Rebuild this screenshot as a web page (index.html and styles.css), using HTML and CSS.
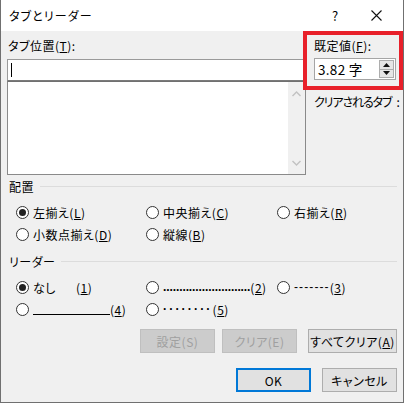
FILE: index.html
```html
<!DOCTYPE html>
<html lang="ja">
<head>
<meta charset="utf-8">
<link rel="stylesheet" href="styles.css">
</head>
<body>
<div class="window">
  <div class="titlebar">
    <span class="title">タブとリーダー</span>
    <span class="help">?</span>
    <span class="close"><svg width="11" height="11" viewBox="0 0 11 11"><path d="M0.5 0.5 L10.5 10.5 M10.5 0.5 L0.5 10.5" stroke="#111" stroke-width="1.1" fill="none"/></svg></span>
  </div>
  <div class="content">
    <div class="top">
      <div class="left">
        <div class="label">タブ位置(<u>T</u>):</div>
        <div class="input"><span class="caret"></span></div>
        <div class="listbox">
          <div class="scrollbar">
            <svg width="9" height="6" viewBox="0 0 9 6"><path d="M0.5 5 L4.5 1 L8.5 5" stroke="#c2c2c2" stroke-width="1.4" fill="none"/></svg>
            <svg width="9" height="6" viewBox="0 0 9 6"><path d="M0.5 1 L4.5 5 L8.5 1" stroke="#c2c2c2" stroke-width="1.4" fill="none"/></svg>
          </div>
        </div>
      </div>
      <div class="right">
        <div class="label">既定値(<u>F</u>):</div>
        <div class="spin">
          <span class="spin-value">3.82 字</span>
          <div class="spin-btns">
            <div class="spin-btn"><svg width="7" height="4" viewBox="0 0 7 4"><path d="M0 4 L3.5 0 L7 4 Z" fill="#111"/></svg></div>
            <div class="spin-btn"><svg width="7" height="4" viewBox="0 0 7 4"><path d="M0 0 L3.5 4 L7 0 Z" fill="#111"/></svg></div>
          </div>
        </div>
        <div class="clear-label">クリアされるタブ<span class="colon">:</span></div>
      </div>
    </div>

    <div class="group-head first"><span>配置</span><div class="rule"></div></div>
    <div class="radios">
      <label class="radio"><span class="dot on"></span>左揃え(<u>L</u>)</label>
      <label class="radio"><span class="dot"></span>中央揃え(<u>C</u>)</label>
      <label class="radio"><span class="dot"></span>右揃え(<u>R</u>)</label>
      <label class="radio"><span class="dot"></span>小数点揃え(<u>D</u>)</label>
      <label class="radio"><span class="dot"></span>縦線(<u>B</u>)</label>
      <span></span>
    </div>

    <div class="group-head"><span>リーダー</span><div class="rule"></div></div>
    <div class="radios">
      <label class="radio"><span class="dot on"></span><span class="none-text">なし</span>(<u>1</u>)</label>
      <label class="radio"><span class="dot"></span><span class="lead-dots">...........................</span>(<u>2</u>)</label>
      <label class="radio"><span class="dot"></span><span class="lead-dash">-------</span>(<u>3</u>)</label>
      <label class="radio"><span class="dot"></span><span class="lead-line"></span>(<u>4</u>)</label>
      <label class="radio"><span class="dot"></span><span class="lead-mid">········</span>(<u>5</u>)</label>
      <span></span>
    </div>

    <div class="btn-row row1">
      <button class="btn disabled w75">設定(S)</button>
      <button class="btn disabled w75 gap-small">クリア(E)</button>
      <button class="btn wide">すべてクリア(<u>A</u>)</button>
    </div>
    <div class="btn-row row2">
      <button class="btn default w75">OK</button>
      <button class="btn w75">キャンセル</button>
    </div>
  </div>
  <div class="highlight"></div>
</div>
</body>
</html>
```
FILE: styles.css
```css
* { box-sizing: border-box; }
html, body { margin: 0; padding: 0; }
body {
  font-family: "Noto Sans CJK JP", "Noto Sans", sans-serif;
  font-size: 12px;
  font-feature-settings: "palt";
  letter-spacing: 0.5px;
  color: #000;
  background: #fff;
}
u { text-decoration: underline; text-underline-offset: 1px; }

.window {
  position: relative;
  width: 404px;
  height: 403px;
  background: #f0f0f0;
  border: 1px solid #707070;
  border-top: none;
  overflow: hidden;
}

.titlebar {
  height: 31px;
  background: #fff;
  display: flex;
  align-items: center;
  margin: 0 -1px;
  padding-left: 9px;
}
.title { flex: 1; font-size: 12px; line-height: 16px; letter-spacing: 1.1px; }
.help { width: 12px; text-align: center; margin-right: 30px; font-size: 13px; letter-spacing: 0; }
.close { width: 11px; height: 11px; margin-right: 22px; display: flex; }

.content { padding-left: 6px; }

.top { display: flex; height: 144px; }
.left { width: 299px; flex: none; }
.label { line-height: 16px; margin-top: 7px; padding-left: 1px; white-space: nowrap; }
.input {
  margin-top: 5px;
  height: 22px;
  background: #fff;
  border: 1px solid #9a9a9a;
  border-bottom-color: #7a7a7a;
  display: flex;
  align-items: center;
  padding-left: 3px;
}
.caret { width: 1px; height: 14px; background: #000; }
.listbox {
  height: 94px;
  background: #fff;
  border: 1px solid #8a8a8a;
  border-top-color: #707070;
  display: flex;
  justify-content: flex-end;
}
.scrollbar {
  width: 17px;
  background: #f0f0f0;
  display: flex;
  flex-direction: column;
  justify-content: space-between;
  align-items: center;
  padding: 9px 0 8px;
}

.right { padding-left: 8px; flex: 1; min-width: 0; }
.right .label { padding-left: 0; }
.spin {
  margin-top: 4px;
  width: 82px;
  height: 22px;
  background: #fff;
  border: 1px solid #a5a5a5;
  display: flex;
  align-items: center;
  justify-content: space-between;
  padding: 0 1px 0 3px;
}
.spin-value { font-size: 13.5px; letter-spacing: 0.3px; }
.spin-btns { width: 15px; height: 18px; display: flex; flex-direction: column; }
.spin-btn {
  flex: 1;
  background: #e6e6e6;
  border: 1px solid #adadad;
  display: flex;
  align-items: center;
  justify-content: center;
}
.spin-btn + .spin-btn { border-top: none; }
.clear-label { margin-top: 14px; line-height: 16px; letter-spacing: -1.1px; white-space: nowrap; }
.colon { margin-left: 5px; letter-spacing: 0; }

.group-head {
  display: flex;
  align-items: center;
  gap: 6px;
  line-height: 16px;
  margin-top: 9px;
  padding-left: 2px;
  padding-right: 6px;
}
.group-head.first { margin-top: 4px; }
.group-head .rule { flex: 1; height: 1px; background: #dcdcdc; margin-top: -1px; }

.radios {
  display: grid;
  grid-template-columns: 130px 131px 1fr;
  grid-auto-rows: 22px;
  padding-left: 9px;
  margin-top: 6px;
}
.radio { display: flex; align-items: center; white-space: nowrap; }
.dot {
  width: 13px;
  height: 13px;
  border: 1px solid #333;
  border-radius: 50%;
  background: #fff;
  margin-right: 4px;
  display: flex;
  align-items: center;
  justify-content: center;
  flex: none;
}
.dot.on::after {
  content: "";
  width: 7px;
  height: 7px;
  border-radius: 50%;
  background: #222;
}
.none-text { width: 43px; }
.lead-dots {
  letter-spacing: -0.1px;
  font-weight: bold;
  font-family: "Liberation Sans", sans-serif;
}
.lead-dash { letter-spacing: 1.1px; font-family: "Liberation Sans", sans-serif; }
.lead-line {
  display: inline-block;
  width: 77px;
  height: 1px;
  background: #000;
  margin-top: 11px;
}
.lead-mid { letter-spacing: 2.2px; font-family: "Liberation Sans", sans-serif; font-weight: bold; }

.btn-row { display: flex; justify-content: flex-end; padding-right: 6px; }
.row1 { margin-top: 9px; }
.row2 { margin-top: 15px; gap: 11px; }
.btn {
  font: inherit;
  font-size: 12px;
  letter-spacing: 0.5px;
  height: 24px;
  padding: 0;
  background: #e1e1e1;
  border: 1px solid #adadad;
  color: #000;
}
.w75 { width: 75px; }
.wide { width: 89px; margin-left: 11px; }
.gap-small { margin-left: 7px; }
.btn.disabled { background: #cccccc; border-color: #bfbfbf; color: #a0a0a0; }
.btn.default { border: 2px solid #0078d7; }

.highlight {
  position: absolute;
  left: 302px;
  top: 31px;
  width: 100px;
  height: 59px;
  border: 4px solid #e8202a;
}
```
